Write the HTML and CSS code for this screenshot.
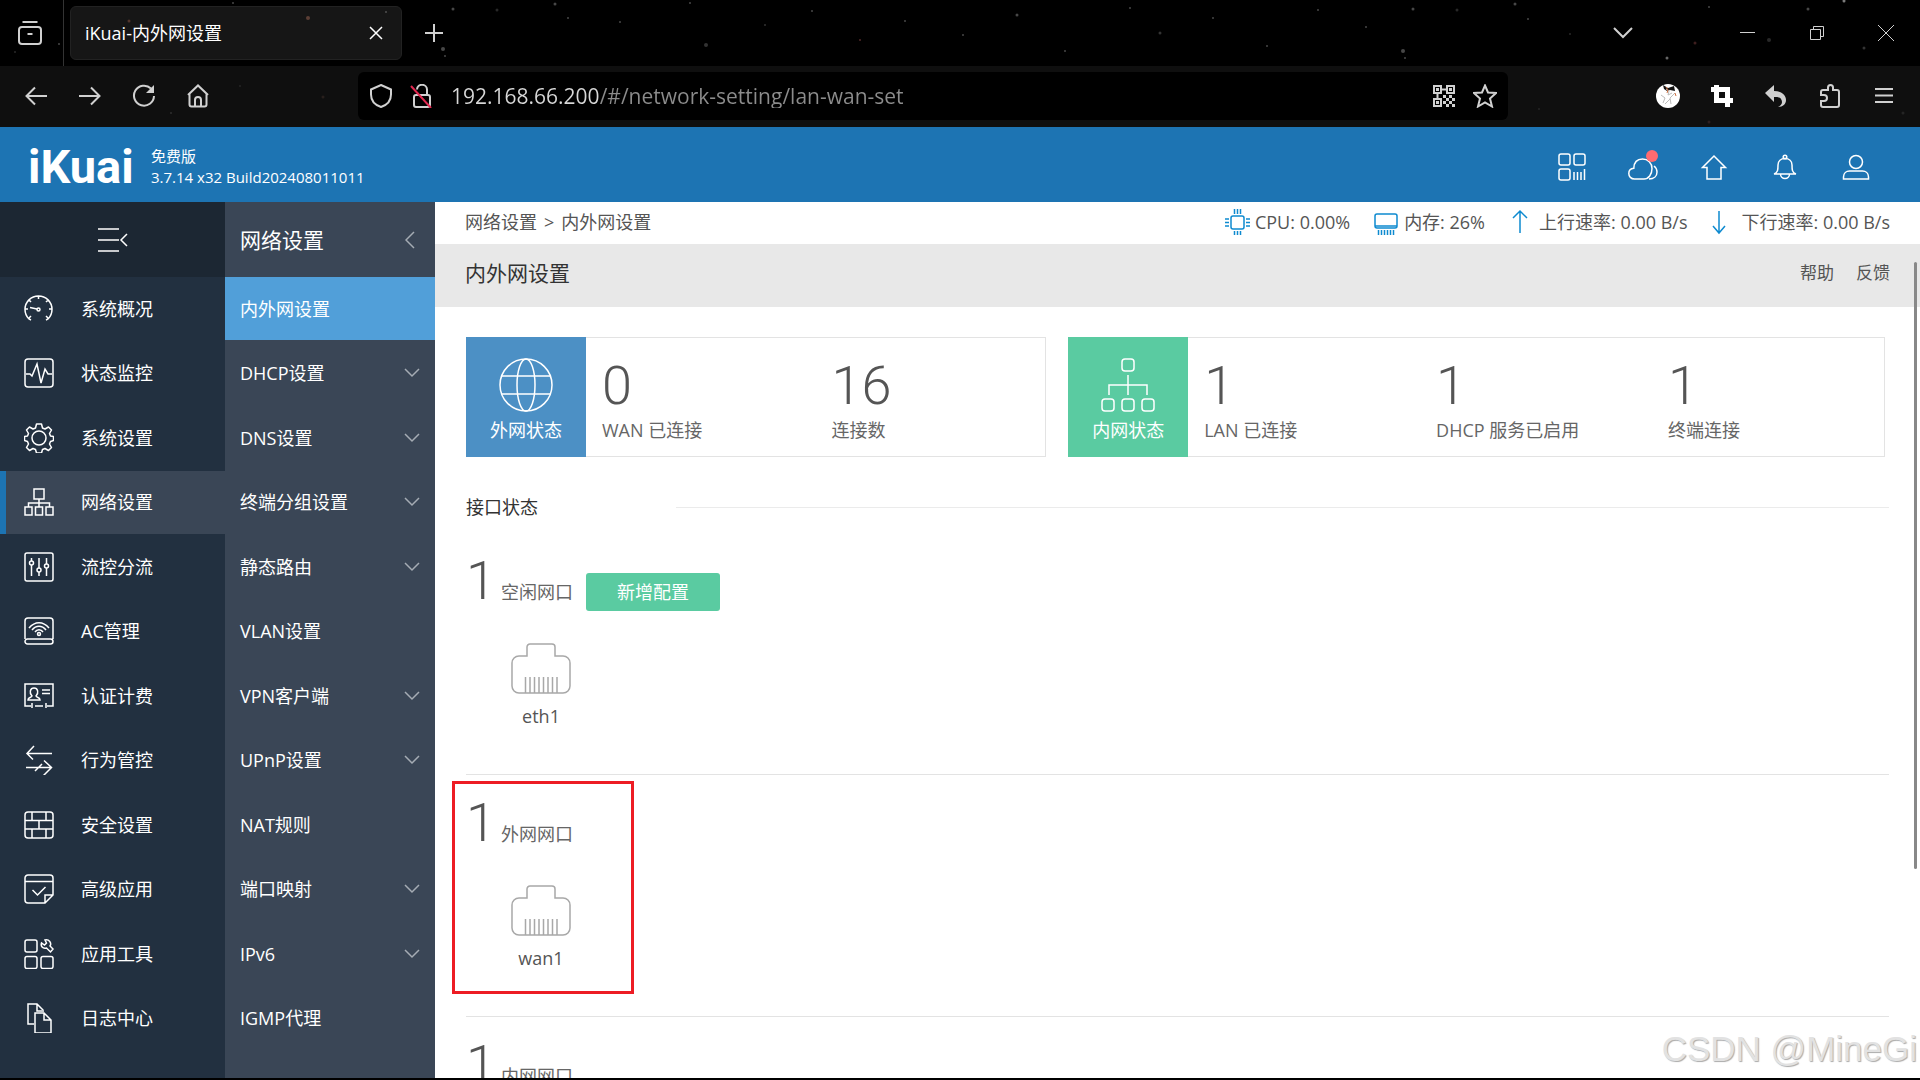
FILE: index.html
```html
<!DOCTYPE html>
<html lang="zh-CN">
<head>
    <meta charset="UTF-8" />
    <meta name="viewport" content="width=device-width, initial-scale=1.0"/>
    <title>iKuai-内外网设置</title>
    <link rel="stylesheet" href="styles.css">
</head>
<body>
    <!-- shared symbols -->
    <svg class="defs" width="0" height="0">
        <symbol id="down" viewBox="0 0 16 10"><path d="M1 1l7 7 7-7"/></symbol>
        <symbol id="port" viewBox="0 0 60 51">
            <path d="M16 13V4a3 3 0 0 1 3-3h22a3 3 0 0 1 3 3v9h8a7 7 0 0 1 7 7v23a7 7 0 0 1-7 7H8a7 7 0 0 1-7-7V20a7 7 0 0 1 7-7z"/>
            <path d="M14.5 34v16M19 34v16M23.5 34v16M28 34v16M32.500 34v16M37 34v16M41.500 34v16M46 34v16"/>
        </symbol>
    </svg>

    <!-- browser chrome -->
    <div class="browser">
        <svg class="stars" width="1920" height="127" fill="#777">
            <circle cx="233" cy="3" r="1"/><circle cx="308" cy="18" r="2" fill="#8a5a4a"/><circle cx="129" cy="21" r="1.500" fill="#7a4a3c"/>
            <circle cx="453" cy="9" r="1.500"/><circle cx="497" cy="10" r="1.500" fill="#444"/><circle cx="555" cy="4" r="1.500"/><circle cx="568" cy="18" r="1"/>
            <circle cx="443" cy="49" r="2"/><circle cx="445" cy="56" r="1"/><circle cx="386" cy="12" r="1"/><circle cx="59" cy="44" r="1"/><circle cx="15" cy="52" r="1" fill="#444"/>
            <circle cx="323" cy="97" r="1.500" fill="#3a2a26"/><circle cx="171" cy="113" r="1" fill="#444"/><circle cx="620" cy="22" r="1"/><circle cx="706" cy="45" r="2" fill="#555"/>
            <circle cx="690" cy="3" r="1"/><circle cx="765" cy="25" r="1" fill="#555"/><circle cx="812" cy="11" r="1"/><circle cx="860" cy="40" r="1" fill="#844"/><circle cx="905" cy="21" r="1"/>
            <circle cx="963" cy="35" r="1"/><circle cx="1017" cy="15" r="1.500"/><circle cx="1065" cy="51" r="1"/><circle cx="1130" cy="8" r="1"/><circle cx="1160" cy="33" r="1.500" fill="#555"/>
            <circle cx="1213" cy="18" r="1"/><circle cx="1267" cy="46" r="1"/><circle cx="1318" cy="10" r="1"/><circle cx="1366" cy="27" r="1"/><circle cx="1413" cy="9" r="1.500"/>
            <circle cx="1457" cy="10" r="1.500" fill="#444"/><circle cx="1403" cy="51" r="2"/><circle cx="1405" cy="58" r="1"/><circle cx="1515" cy="4" r="1.500"/><circle cx="1528" cy="19" r="1"/>
            <circle cx="1570" cy="34" r="1" fill="#444"/><circle cx="1667" cy="58" r="1.500" fill="#aaa"/><circle cx="1695" cy="43" r="1.500" fill="#633"/><circle cx="1709" cy="7" r="1"/>
            <circle cx="1769" cy="40" r="2" fill="#444"/><circle cx="1808" cy="9" r="1.500"/><circle cx="1844" cy="1" r="1.500" fill="#ccc"/><circle cx="1864" cy="48" r="1.500" fill="#555"/><circle cx="1903" cy="113" r="1.500" fill="#333"/>
            <circle cx="1709" cy="122" r="1.500" fill="#43282a"/><circle cx="1539" cy="109" r="1" fill="#333"/><circle cx="240" cy="86" r="1" fill="#333"/>
        </svg>

        <div class="tab-bar">
            <button class="all-tabs" aria-label="标签页">
                <svg width="24" height="24" viewBox="0 0 24 24"><path d="M4.500 1h15"/><rect x="1" y="6" width="22" height="17" rx="3"/><path d="M9.500 13h5"/></svg>
            </button>
            <div class="tab">
                <span>iKuai-内外网设置</span>
                <button aria-label="关闭标签页"><svg width="14" height="14" viewBox="0 0 14 14"><path d="M1 1l12 12M13 1L1 13"/></svg></button>
            </div>
            <button class="new-tab" aria-label="新建标签页"><svg width="18" height="18" viewBox="0 0 18 18"><path d="M9 0v18M0 9h18"/></svg></button>
            <button class="list-tabs" aria-label="列出标签页"><svg width="20" height="12" viewBox="0 0 20 12"><path d="M1 1l9 9 9-9"/></svg></button>
            <div class="window-buttons">
                <button aria-label="最小化"><svg width="16" height="16" viewBox="0 0 16 16"><path d="M0 7.500h15"/></svg></button>
                <button aria-label="还原"><svg width="16" height="16" viewBox="0 0 16 16"><path d="M1.500 4.500h10v10h-10zM4.500 4.500v-3h10v10h-3"/></svg></button>
                <button aria-label="关闭"><svg width="16" height="16" viewBox="0 0 16 16"><path d="M0 0l16 16M16 0L0 16"/></svg></button>
            </div>
        </div>

        <div class="nav-bar">
            <div class="nav-buttons">
                <button aria-label="后退"><svg width="24" height="24" viewBox="0 0 24 24"><path d="M23 12H3M11 3.500L2.500 12l8.500 8.500"/></svg></button>
                <button aria-label="前进"><svg width="24" height="24" viewBox="0 0 24 24"><path d="M1 12h20M13 3.500l8.500 8.500-8.500 8.500"/></svg></button>
                <button aria-label="刷新"><svg width="24" height="24" viewBox="0 0 24 24"><path d="M19 4.500A10 10 0 1 0 22 12"/><path class="solid" d="M22 1v8h-8z"/></svg></button>
                <button aria-label="主页"><svg width="24" height="24" viewBox="0 0 24 24"><path d="M2 11L12 1.500 22 11M3.500 10v10.500a2 2 0 0 0 2 2h13a2 2 0 0 0 2-2V10M9 22v-6a3 3 0 0 1 6 0v6"/></svg></button>
            </div>
            <div class="url-box">
                <svg width="24" height="24" viewBox="0 0 24 24"><path d="M12 1l10 4.500v5c0 6-4 10.500-10 12.500C6 21 2 16.500 2 10.500v-5z"/></svg>
                <svg width="24" height="24" viewBox="0 0 24 24"><rect x="4" y="11" width="16" height="12" rx="2"/><path d="M7 5.500a5 5 0 0 1 10 .500v5"/><path class="slash" d="M1 2l20 22"/></svg>
                <input class="url" type="text" aria-label="地址" value="192.168.66.200/#/network-setting/lan-wan-set">
                <button aria-label="二维码"><svg width="24" height="24" viewBox="0 0 24 24"><path d="M2 2h7v7H2zM15 2h7v7h-7zM2 15h7v7H2zM9 5.500h6M5.500 9v6"/><path class="solid" d="M4 4h3v3H4zM17 4h3v3h-3zM4 17h3v3H4zM11 11h3v3h-3zM17 11h3v3h-3zM14 14h3v3h-3zM20 14h3v3h-3zM11 17h3v3h-3zM17 17h3v3h-3zM14 20h3v3h-3zM20 20h3v3h-3z"/></svg></button>
                <button aria-label="收藏"><svg width="24" height="24" viewBox="0 0 24 24"><path d="M12 1.500l3 7 8 .5-6 5.500 2 8-7-4-7 4 2-8L1 9l8-.5z"/></svg></button>
            </div>
            <div class="nav-buttons">
                <button aria-label="账户"><svg width="24" height="24" viewBox="0 0 24 24"><circle cx="12" cy="12" r="12" fill="#fff" stroke="none"/><path d="M7 1l5 3 6-2 1 5-5-1-3 1-3-2z" fill="#111" stroke="none"/><path d="M10 5l3 2-1 4 4-2M5 11l4 3-2 5M19 9l-5 5 1 6M9 20l5-5" fill="none" stroke="#bbb" stroke-width="1"/><path d="M10 3l2 3-1 3M19 9l1 3" stroke="#d07040" stroke-width="1"/></svg></button>
                <button aria-label="截图"><svg class="crop" width="24" height="24" viewBox="0 0 24 24"><path d="M6.500 1v15.500H23M1 5.500h16.500V23"/></svg></button>
                <button aria-label="撤销"><svg width="24" height="24" viewBox="0 0 24 24"><path class="solid" d="M10 1v6c8 0 12 4 12 9 0 4-3 7-8 7 4-2 5-5 3-8-1-2-4-2-7-2v5L1 9z"/></svg></button>
                <button aria-label="扩展"><svg width="24" height="24" viewBox="0 0 24 24"><path d="M3 10V8a2 2 0 0 1 2-2h5V3.500a2.500 2.500 0 0 1 5 0V6h4a2 2 0 0 1 2 2v13a2 2 0 0 1-2 2H5a2 2 0 0 1-2-2v-4h3a3 3 0 0 0 0-6H3z"/></svg></button>
                <button aria-label="菜单"><svg width="24" height="24" viewBox="0 0 24 24"><path d="M3 5h18M3 11.500h18M3 18h18"/></svg></button>
            </div>
        </div>
    </div>

    <!-- router console -->
    <header class="top">
        <div class="logo">iKuai</div>
        <div class="version">
            <div>免费版</div>
            <div>3.7.14 x32 Build202408011011</div>
        </div>
        <div class="top-icons">
            <button aria-label="应用"><svg width="30" height="30" viewBox="0 0 30 30"><rect x="2" y="2" width="11" height="11" rx="2"/><rect x="17" y="2" width="11" height="11" rx="2"/><rect x="2" y="17" width="11" height="11" rx="2"/><path d="M17 20v8M20.500 20v8M24 20v8M27.500 17v11"/></svg></button>
            <button class="has-dot" aria-label="云平台"><svg width="30" height="30" viewBox="0 0 30 30"><path d="M6.500 27C3 27 .8 24.500.8 21.500c0-3 2-5 5-5.200C6 10 9.500 7 14.500 7 20 7 24 11 24 16.500c0 6-3.500 10.500-8 10.500z"/><path d="M26 14c2 1.500 3 3.500 3 6 0 4-3 7-8 7"/></svg></button>
            <button aria-label="首页"><svg width="30" height="30" viewBox="0 0 30 30"><path d="M15 4L3.500 15.500H8V27h14V15.500h4.500z"/></svg></button>
            <button aria-label="消息"><svg width="30" height="30" viewBox="0 0 30 30"><circle cx="15" cy="5" r="1.800"/><path d="M4 22c4-1 4-5 4-9 0-4 3-6.500 7-6.500s7 2.500 7 6.500c0 4 0 8 4 9zM10.500 22a4.500 4.500 0 0 0 9 0"/></svg></button>
            <button aria-label="用户"><svg width="30" height="30" viewBox="0 0 30 30"><circle cx="15" cy="10" r="6.500"/><path d="M2.500 27v-2c0-4 3-6 6-6h13c3 0 6 2 6 6v2z"/></svg></button>
        </div>
    </header>

    <div class="layout">
        <nav class="sidebar">
            <button class="collapse" aria-label="收起菜单"><svg width="32" height="26" viewBox="0 0 32 26"><path d="M1 2h21M1 13h21M1 24h21M30 7l-6 6 6 6"/></svg></button>
            <div class="menu">
                <a href="#"><svg viewBox="0 0 30 30"><path d="M7 26l-2-1a13.500 13.500 0 1 1 19 0l-2 1M14.500 2v3M5 6l2 2M24 6l-2 2M1 15h3M28 15h-3M5 24l2-2M24 24l-2-2M6 13.500l7 1.500"/><circle cx="14.500" cy="15.500" r="1.500"/></svg>系统概况</a>
                <a href="#"><svg viewBox="0 0 30 30"><rect x="1" y="1" width="28" height="28" rx="3"/><path d="M2 16h4l2 2 5-12 4 19 4-14 3 5h4"/></svg>状态监控</a>
                <a href="#"><svg viewBox="0 0 30 30"><path d="M12.500 1h5l1 4 2.500 1 3.500-2 3 3-2 3.500 1 2.500 3 .5v4l-3 1-1 2.500 2 3.500-3 3-3.500-2-2.500 1-1 3.500h-5l-1-3.500-2.500-1-3.500 2-3-3 2-3.500-1-2.500-3-1v-4l3-.5 1-2.500-2-3.500 3-3 3.500 2 2.500-1z" stroke-linejoin="round"/><circle cx="15" cy="15" r="7"/></svg>系统设置</a>
                <a class="active" href="#"><svg viewBox="0 0 30 30"><path d="M10 2h10v10H10zM1 20h7v8H1zM11.500 20h7v8h-7zM22 20h7v8h-7zM15 12v8M4.500 20v-4h21v4"/></svg>网络设置</a>
                <a href="#"><svg viewBox="0 0 30 30"><rect x="1" y="1" width="28" height="28" rx="2"/><path d="M7.500 6v3M7.500 13v11M15 6v10M15 20v4M22.500 6v6M22.500 16v8"/><circle cx="7.500" cy="11" r="2"/><circle cx="15" cy="18" r="2"/><circle cx="22.500" cy="14" r="2"/></svg>流控分流</a>
                <a href="#"><svg viewBox="0 0 30 30"><path d="M1 23V5a3 3 0 0 1 3-3h22a3 3 0 0 1 3 3v18M1 25.500a2.500 2.500 0 0 1 2.500-2.500h23a2.500 2.500 0 0 1 0 5h-23A2.500 2.500 0 0 1 1 25.500zM5 12c6-7 14-7 20 0M8 14c4-5 10-5 14 0M11 16c2-3 6-3 8 0"/><circle cx="15" cy="18" r="1.500"/></svg>AC管理</a>
                <a href="#"><svg viewBox="0 0 30 30"><path d="M7 25H1V3h28v22h-6M8 22v5M22 22v5M11 25h8M18 9h8M18 12.500h8M4 19c0-3 3-2 4-4-3-3-2-8 2-8s5 5 2 8c1 2 4 1 4 4z"/></svg>认证计费</a>
                <a href="#"><svg viewBox="0 0 30 30"><path d="M10 1L3 8.500l6 6M3 8.500h25M2 22.500h25M20 15.500l7.500 7-8 8M18 19l-7 7"/></svg>行为管控</a>
                <a href="#"><svg viewBox="0 0 30 30"><rect x="1" y="2" width="28" height="26" rx="3"/><path d="M1 10.500h28M1 19h28M8 2v8.500M22 2v8.500M15 10.500V19M8 19v9M22 19v9"/></svg>安全设置</a>
                <a href="#"><svg viewBox="0 0 30 30"><path d="M21 29H4a3 3 0 0 1-3-3V4a3 3 0 0 1 3-3h22a3 3 0 0 1 3 3v17zM21 29v-8h8M1 7.500h28M8.500 16l5 5 8-8"/></svg>高级应用</a>
                <a href="#"><svg viewBox="0 0 30 30"><rect x="1" y="1" width="12" height="12" rx="2"/><rect x="1" y="17.500" width="12" height="12" rx="2"/><rect x="17" y="17.500" width="12" height="12" rx="2"/><path d="M21 1c4-1 7 3 5 6l3 3-2.500 3-4-4c-4 1-6-2-5-5l3 2 2-2z"/></svg>应用工具</a>
                <a href="#"><svg viewBox="0 0 30 30"><path d="M10 21H4V1h9l6 6v2M13 1v7h5M11 10h9l7 7v13H11zM20 10v7h7"/></svg>日志中心</a>
            </div>
        </nav>

        <nav class="submenu">
            <div class="submenu-title">网络设置<svg width="10" height="18" viewBox="0 0 10 18"><path d="M9 1L1 9l8 8"/></svg></div>
            <div class="menu">
                <a class="current" href="#">内外网设置</a>
                <a href="#">DHCP设置<svg><use href="#down"/></svg></a>
                <a href="#">DNS设置<svg><use href="#down"/></svg></a>
                <a href="#">终端分组设置<svg><use href="#down"/></svg></a>
                <a href="#">静态路由<svg><use href="#down"/></svg></a>
                <a href="#">VLAN设置</a>
                <a href="#">VPN客户端<svg><use href="#down"/></svg></a>
                <a href="#">UPnP设置<svg><use href="#down"/></svg></a>
                <a href="#">NAT规则</a>
                <a href="#">端口映射<svg><use href="#down"/></svg></a>
                <a href="#">IPv6<svg><use href="#down"/></svg></a>
                <a href="#">IGMP代理</a>
            </div>
        </nav>

        <main class="main">
            <div class="status-bar">
                <div class="crumbs"><span>网络设置</span><span>&gt;</span><span>内外网设置</span></div>
                <div class="stats">
                    <span><svg width="26" height="26" viewBox="0 0 26 26"><rect x="6" y="7" width="13" height="13" rx="2"/><path d="M9.500 0v5M12.500 0v5M15.500 0v5M9.500 22v4M12.500 22v4M15.500 22v4M0 10h4M0 13.500h4M0 17h4M21 10h4M21 13.500h4M21 17h4"/></svg>CPU: 0.00%</span>
                    <span><svg width="26" height="26" viewBox="0 0 26 26"><rect x="1" y="5" width="22" height="14" rx="2"/><path d="M1 17h22M4.500 21v5M7.500 21v5M10.500 21v5M13.500 21v5M16.500 21v5M19.500 21v5"/></svg>内存: 26%</span>
                    <span><svg width="26" height="26" viewBox="0 0 26 26"><path d="M11 2v22M4 9l7-7 7 7"/></svg>上行速率: 0.00 B/s</span>
                    <span><svg width="26" height="26" viewBox="0 0 26 26"><path d="M7 2v22M1 17l6 7 6-7"/></svg>下行速率: 0.00 B/s</span>
                </div>
            </div>
            <div class="title-bar">
                <h1>内外网设置</h1>
                <div class="title-links"><a href="#">帮助</a><a href="#">反馈</a></div>
            </div>

            <div class="content">
                <div class="cards">
                    <div class="card wan">
                        <div class="card-label">
                            <svg width="56" height="56" viewBox="0 0 56 56"><circle cx="28" cy="28" r="26"/><ellipse cx="28" cy="28" rx="9" ry="26"/><path d="M4 19h48M4 37h48"/></svg>
                            外网状态
                        </div>
                        <div class="item"><b>0</b>WAN 已连接</div>
                        <div class="item"><b>16</b>连接数</div>
                    </div>
                    <div class="card lan">
                        <div class="card-label">
                            <svg width="56" height="56" viewBox="0 0 56 56"><rect x="22" y="2" width="12" height="12" rx="3"/><rect x="2" y="42" width="12" height="12" rx="3"/><rect x="22" y="42" width="12" height="12" rx="3"/><rect x="42" y="42" width="12" height="12" rx="3"/><path d="M28 18v20M9 38V28h38v10"/></svg>
                            内网状态
                        </div>
                        <div class="item"><b>1</b>LAN 已连接</div>
                        <div class="item"><b>1</b>DHCP 服务已启用</div>
                        <div class="item"><b>1</b>终端连接</div>
                    </div>
                </div>

                <h2>接口状态</h2>

                <section class="ports">
                    <div class="ports-head"><b>1</b><span>空闲网口</span><button>新增配置</button></div>
                    <div class="port"><svg width="60" height="51"><use href="#port"/></svg>eth1</div>
                </section>
                <section class="ports marked">
                    <div class="ports-head"><b>1</b><span>外网网口</span></div>
                    <div class="port"><svg width="60" height="51"><use href="#port"/></svg>wan1</div>
                </section>
                <section class="ports">
                    <div class="ports-head"><b>1</b><span>内网网口</span></div>
                </section>
            </div>
            <div class="scroll-thumb"></div>
            <div class="watermark">CSDN @MineGi</div>
        </main>
    </div>
</body>
</html>
```
FILE: styles.css
```css
*,
*::before,
*::after {
    box-sizing: border-box;
}
body {
    margin: 0;
    height: 100vh;
    display: flex;
    flex-direction: column;
    overflow: hidden;
    background: #000;
    border-bottom: 2px solid #000;
    font-family: "Open Sans", "Noto Sans CJK SC", sans-serif;
    font-size: 18px;
    line-height: 24px;
    color: #555;
}
a {
    color: inherit;
    text-decoration: none;
}
button {
    display: flex;
    align-items: center;
    justify-content: center;
    padding: 0;
    border: none;
    background: none;
    font: inherit;
    color: inherit;
    cursor: pointer;
}
svg {
    flex: none;
    fill: none;
    stroke: currentColor;
    stroke-width: 1.5;
}
.defs {
    position: absolute;
}

/* browser */
.browser {
    position: relative;
    flex: none;
    color: #d0d0d0;
}
.browser svg {
    stroke-width: 2;
}
.browser .solid {
    fill: currentColor;
    stroke: none;
}
.browser .crop {
    stroke: #fff;
    stroke-width: 5;
}
.browser .stars {
    position: absolute;
    left: 0;
    top: 0;
    stroke: none;
    fill: #777;
    opacity: 0.6;
    pointer-events: none;
}
.tab-bar {
    display: flex;
    align-items: center;
    height: 66px;
}
.all-tabs {
    width: 64px;
    height: 66px;
    padding-right: 3px;
    border-right: 1px solid #333;
}
.tab {
    display: flex;
    align-items: center;
    justify-content: space-between;
    width: 332px;
    height: 54px;
    margin-left: 6px;
    padding: 0 18px 0 14px;
    border: 1px solid #222;
    border-radius: 6px;
    background: #161616;
    color: #fff;
}
.tab svg {
    stroke-width: 1.5;
}
.new-tab {
    width: 64px;
    height: 48px;
}
.list-tabs {
    width: 48px;
    height: 48px;
    margin-left: auto;
    margin-right: 66px;
}
.window-buttons {
    display: flex;
}
.window-buttons button {
    width: 69px;
    height: 66px;
}
.window-buttons svg {
    stroke-width: 1;
}
.nav-bar {
    display: flex;
    align-items: center;
    height: 61px;
    padding: 0 9px 2px;
    background: #0f0f0f;
}
.nav-buttons {
    display: flex;
}
.nav-buttons button {
    width: 54px;
    height: 48px;
}
.url-box {
    flex: 1;
    display: flex;
    align-items: center;
    gap: 17px;
    height: 48px;
    margin: 0 133px;
    padding: 0 11px;
    border-radius: 6px;
    background: #000;
}
.url-box .slash {
    stroke: #e22850;
}
.url {
    flex: 1;
    min-width: 0;
    padding: 0;
    border: none;
    outline: none;
    font: inherit;
    font-size: 21px;
    /* host part brighter than the path */
    background: linear-gradient(to right, #d8d8d8 149px, #8c8c8c 149px);
    -webkit-background-clip: text;
    background-clip: text;
    color: transparent;
}

/* top */
.top {
    flex: none;
    display: flex;
    align-items: center;
    height: 75px;
    padding: 4px 49px 0 28px;
    background: #1d74b3;
    color: #fff;
}
.logo {
    width: 106px;
    font: bold 47px/48px Roboto, sans-serif;
}
.version {
    margin-left: 17px;
    font-size: 15px;
    line-height: 21px;
}
.top-icons {
    display: flex;
    gap: 41px;
    margin-left: auto;
}
.has-dot {
    position: relative;
}
.has-dot::after {
    content: "";
    position: absolute;
    top: -2px;
    right: 0;
    width: 12px;
    height: 12px;
    border-radius: 50%;
    background: #ff6b70;
}

/* menus */
.layout {
    flex: 1;
    min-height: 0;
    display: flex;
}
.sidebar,
.submenu {
    display: flex;
    flex-direction: column;
    color: #fff;
}
.sidebar {
    width: 225px;
    background: #223040;
}
.submenu {
    width: 210px;
    background: #3a4656;
}
.collapse {
    height: 75px;
    background: #1c2733;
}
.menu {
    flex: 1;
    display: flex;
    flex-direction: column;
    justify-content: space-between;
    padding-bottom: 28px;
}
.menu a {
    display: flex;
    align-items: center;
    height: 63px;
}
.sidebar a {
    gap: 27px;
    padding-left: 18px;
    border-left: 6px solid transparent;
}
.sidebar a.active {
    background: #3a4656;
    border-left-color: #1d74b3;
}
.sidebar a svg {
    width: 30px;
    height: 30px;
}
.submenu-title,
.submenu a {
    justify-content: space-between;
    padding: 0 15px;
}
.submenu-title {
    display: flex;
    align-items: center;
    height: 75px;
    padding-right: 20px;
    font-size: 21px;
}
.submenu .current {
    background: #519fd9;
}
.submenu svg {
    stroke: #a5acb4;
}
.submenu a svg {
    width: 16px;
    height: 10px;
}

/* main */
.main {
    position: relative;
    flex: 1;
    min-width: 0;
    overflow: hidden;
    background: #fff;
}
.status-bar,
.title-bar {
    display: flex;
    align-items: center;
    justify-content: space-between;
    padding: 0 30px;
}
.status-bar {
    height: 42px;
    padding-bottom: 2px;
}
.crumbs {
    display: flex;
    gap: 7px;
}
.stats {
    display: flex;
    gap: 24px;
}
.stats span {
    display: flex;
    align-items: center;
    gap: 4px;
}
.stats svg {
    stroke: #0e8ad0;
}
.title-bar {
    height: 63px;
    padding-bottom: 6px;
    background: #e8e8e8;
}
h1 {
    margin: 0;
    font-size: 21px;
    font-weight: 400;
    color: #333;
}
.title-links {
    display: flex;
    gap: 22px;
    font-size: 17px;
}
.content {
    padding: 30px 31px 0;
}
.cards {
    display: flex;
    gap: 22px;
    padding-right: 4px;
}
.card {
    display: flex;
    height: 120px;
    border: 1px solid #e3e3e3;
    border-left: none;
}
.wan {
    flex: 580;
}
.lan {
    flex: 817;
}
.card-label {
    flex: none;
    display: flex;
    flex-direction: column;
    align-items: center;
    gap: 5px;
    width: 120px;
    height: 120px;
    margin-top: -1px;
    padding-top: 20px;
    color: #fff;
}
.wan .card-label {
    background: #4c90c5;
}
.lan .card-label {
    background: #5acba1;
}
.item {
    flex: 1;
    padding: 18px 0 0 16px;
    color: #666;
}
.item b,
.ports-head b {
    font: 300 54px/60px Roboto, sans-serif;
    color: #555;
}
.item b {
    display: block;
    margin-bottom: 2px;
}
h2 {
    display: flex;
    align-items: center;
    margin: 37px 0 11px;
    font-size: 18px;
    line-height: 27px;
    font-weight: 400;
    color: #333;
}
h2::after {
    content: "";
    flex: 1;
    height: 1px;
    margin-left: 138px;
    background: #ebebeb;
}
.ports {
    position: relative;
    padding: 18px 0 46px;
    border-top: 1px solid #e3e3e3;
}
h2 + .ports {
    border-top-color: transparent;
}
.ports-head {
    display: flex;
    align-items: baseline;
    height: 60px;
    color: #666;
}
.ports-head span {
    margin: 0 13px 0 5px;
}
.ports-head button {
    width: 134px;
    height: 38px;
    border-radius: 3px;
    background: #5acba1;
    color: #fff;
}
.port {
    display: flex;
    flex-direction: column;
    align-items: center;
    gap: 10px;
    width: 150px;
    margin-top: 32px;
}
.port svg {
    stroke: #a8a8a8;
}
.marked::before {
    content: "";
    position: absolute;
    top: 6px;
    left: -14px;
    width: 182px;
    height: 213px;
    border: 3px solid #ed1c24;
}
.scroll-thumb {
    position: absolute;
    top: 60px;
    right: 3px;
    width: 3px;
    height: 607px;
    border-radius: 2px;
    background: #888;
}
.watermark {
    position: absolute;
    right: 3px;
    bottom: 8px;
    font: 35px/42px "Liberation Sans", sans-serif;
    color: #e2e2e2;
    text-shadow: 1px 1px 1px #aaa;
}
```
